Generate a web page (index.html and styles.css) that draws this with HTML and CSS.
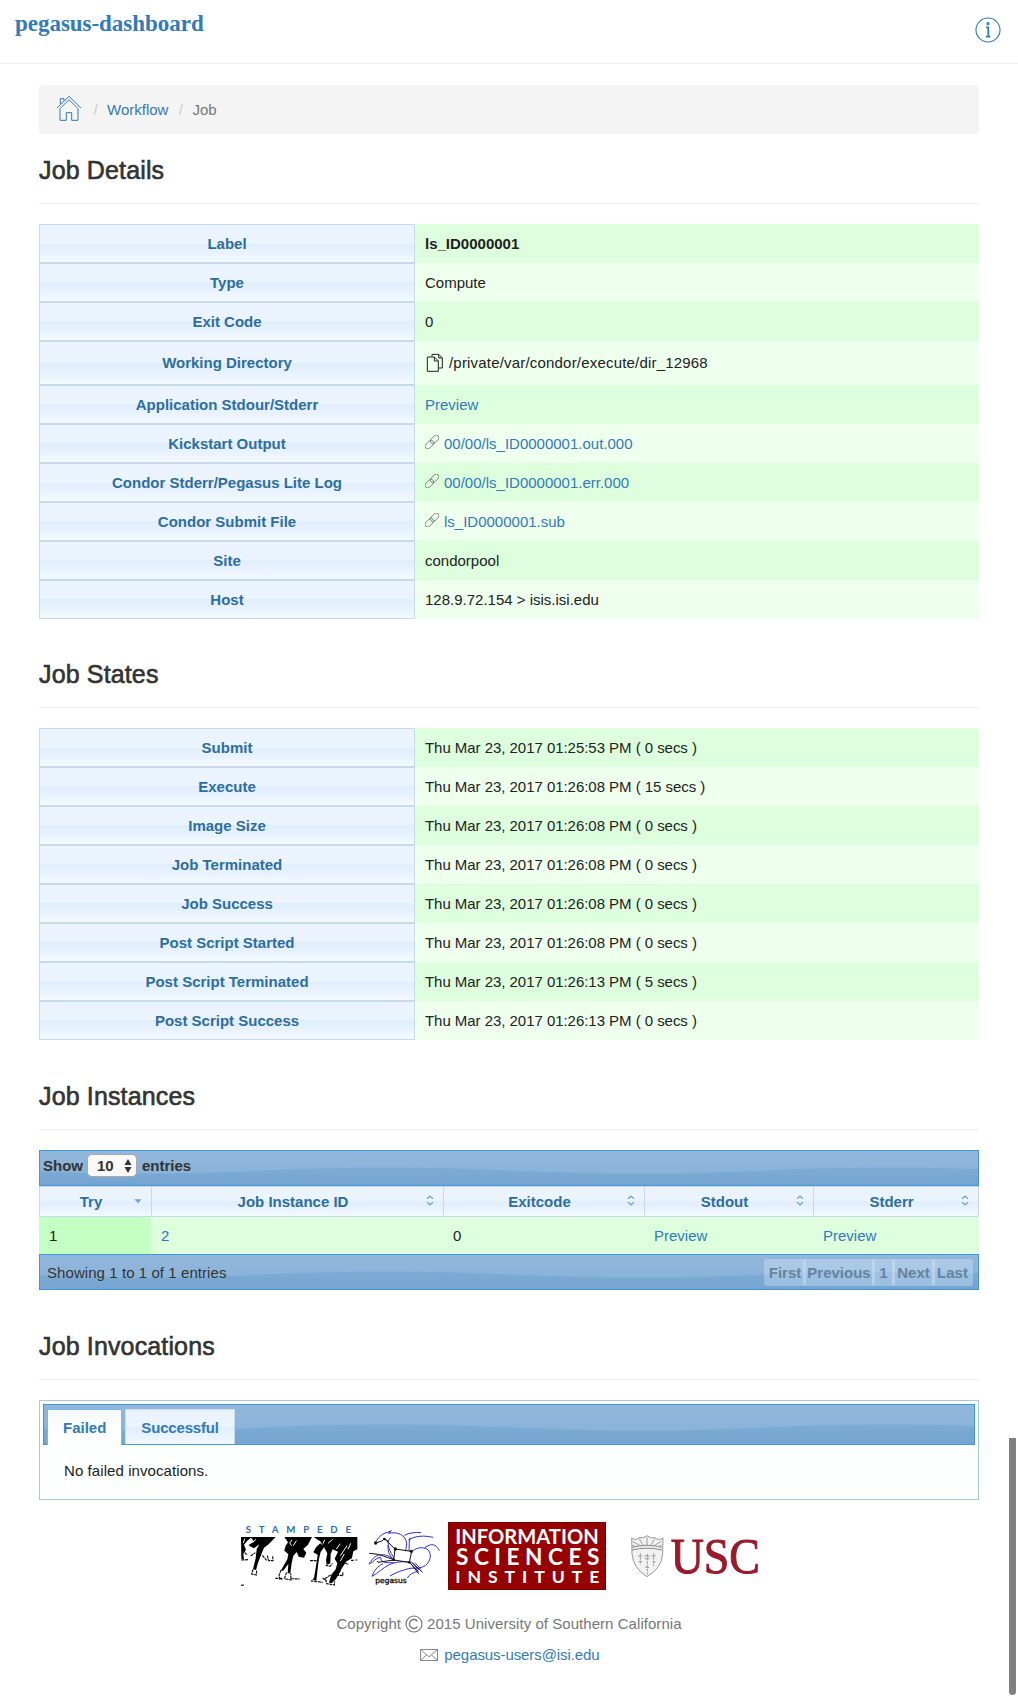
FILE: index.html
```html
<!DOCTYPE html>
<html lang="en">
<head>
<meta charset="utf-8">
<title>pegasus-dashboard</title>
<link rel="stylesheet" href="styles.css">
</head>
<body>
<svg class="defs" width="0" height="0" aria-hidden="true">
  <symbol id="link" viewBox="0 0 40 42"><g fill="none" stroke="#777" stroke-width="2.600" transform="rotate(-45 20 21)"><rect x="-6" y="13" width="30" height="16" rx="8"/><rect x="16" y="13" width="30" height="16" rx="8"/></g></symbol>
  <symbol id="sort" viewBox="0 0 24 32"><path d="M3 11 12 3l9 8M3 21l9 8 9-8" fill="none" stroke="#72a7d6" stroke-width="4"/></symbol>
</svg>

<header class="topbar">
  <a class="brand" href="#">pegasus-dashboard</a>
  <a class="info" href="#" aria-label="About"><svg width="26" height="26" viewBox="0 0 26 26"><circle cx="13" cy="13" r="12" fill="none" stroke="#337ab7" stroke-width="1.100"/><circle cx="13" cy="6.700" r="1.600" fill="#337ab7"/><path d="M11 10.400H13.300V19.500M10.900 19.600h4.400" fill="none" stroke="#337ab7" stroke-width="1.800"/></svg></a>
</header>

<main class="container">
  <nav class="breadcrumb">
    <a href="#" aria-label="Home"><svg class="home" width="26" height="27" viewBox="168 285 78 81"><path d="M171 324 207 289l36 35M180 361V326l27-27 27 27v35H215V338H199v23ZM181 312V296h11v7" fill="none" stroke="#337ab7" stroke-width="3"/></svg></a>
    <span class="sep">/</span><a href="#">Workflow</a><span class="sep">/</span><span class="here">Job</span>
  </nav>

  <h2>Job Details</h2>
  <table class="details">
    <tr><th>Label</th><td><b>ls_ID0000001</b></td></tr>
    <tr><th>Type</th><td>Compute</td></tr>
    <tr><th>Exit Code</th><td>0</td></tr>
    <tr class="tall"><th>Working Directory</th><td><span class="item path"><svg class="copy" width="18" height="19" viewBox="1188 415 54 57"><path d="M1192 427h21l12 12v31h-33ZM1213 427v12h12M1206 426v-7h20l11 11v30h-10M1226 419v11h11" fill="none" stroke="#222" stroke-width="3"/></svg>/private/var/condor/execute/dir_12968</span></td></tr>
    <tr><th>Application Stdour/Stderr</th><td><a href="#">Preview</a></td></tr>
    <tr><th>Kickstart Output</th><td><span class="item"><svg class="chain"><use href="#link"/></svg><a href="#">00/00/ls_ID0000001.out.000</a></span></td></tr>
    <tr><th>Condor Stderr/Pegasus Lite Log</th><td><span class="item"><svg class="chain"><use href="#link"/></svg><a href="#">00/00/ls_ID0000001.err.000</a></span></td></tr>
    <tr><th>Condor Submit File</th><td><span class="item"><svg class="chain"><use href="#link"/></svg><a href="#">ls_ID0000001.sub</a></span></td></tr>
    <tr><th>Site</th><td>condorpool</td></tr>
    <tr><th>Host</th><td>128.9.72.154 &gt; isis.isi.edu</td></tr>
  </table>

  <h2>Job States</h2>
  <table class="details states">
    <tr><th>Submit</th><td>Thu Mar 23, 2017 01:25:53 PM ( 0 secs )</td></tr>
    <tr><th>Execute</th><td>Thu Mar 23, 2017 01:26:08 PM ( 15 secs )</td></tr>
    <tr><th>Image Size</th><td>Thu Mar 23, 2017 01:26:08 PM ( 0 secs )</td></tr>
    <tr><th>Job Terminated</th><td>Thu Mar 23, 2017 01:26:08 PM ( 0 secs )</td></tr>
    <tr><th>Job Success</th><td>Thu Mar 23, 2017 01:26:08 PM ( 0 secs )</td></tr>
    <tr><th>Post Script Started</th><td>Thu Mar 23, 2017 01:26:08 PM ( 0 secs )</td></tr>
    <tr><th>Post Script Terminated</th><td>Thu Mar 23, 2017 01:26:13 PM ( 5 secs )</td></tr>
    <tr><th>Post Script Success</th><td>Thu Mar 23, 2017 01:26:13 PM ( 0 secs )</td></tr>
  </table>

  <h2 class="wide-gap">Job Instances</h2>
  <section>
    <div class="bar length-bar">Show <span class="select">10<svg width="8" height="14" viewBox="0 0 8 14"><path d="M4 0 7.500 6H.5ZM4 14 .5 8h7Z" fill="#333"/></svg></span> entries</div>
    <div class="grid head">
      <div>Try<svg class="sort" viewBox="0 0 24 32"><path d="M1 12h22L12 24Z" fill="#6ea5d4"/></svg></div>
      <div>Job Instance ID<svg class="sort"><use href="#sort"/></svg></div>
      <div>Exitcode<svg class="sort"><use href="#sort"/></svg></div>
      <div>Stdout<svg class="sort"><use href="#sort"/></svg></div>
      <div>Stderr<svg class="sort"><use href="#sort"/></svg></div>
    </div>
    <div class="grid row">
      <div class="sorted">1</div><div><a href="#">2</a></div><div>0</div><div><a href="#">Preview</a></div><div><a href="#">Preview</a></div>
    </div>
    <div class="bar page-bar">
      <span>Showing 1 to 1 of 1 entries</span>
      <div class="pager"><span class="p-first">First</span><span class="p-prev">Previous</span><span class="p-one">1</span><span class="p-next">Next</span><span class="p-last">Last</span></div>
    </div>
  </section>

  <h2 class="wide-gap">Job Invocations</h2>
  <section class="tabs">
    <div class="bar tab-bar"><a class="tab active" href="#">Failed</a><a class="tab" href="#">Successful</a></div>
    <p>No failed invocations.</p>
  </section>
</main>

<footer>
  <div class="logos">
    <svg class="stampede" width="118" height="68" viewBox="30 36 354 204">
      <text x="47" y="70" font-family="Lato, sans-serif" font-weight="bold" font-size="29" fill="#2a6fad" textLength="316">STAMPEDE</text>
      <path d="M33 81H66L52 92 42 104 48 119 40 131 42 151 34 146ZM62 81H137L116 103 102 113 94 133 84 158 78 180 69 178 77 145 80 118 88 103 72 115 54 106 72 95ZM163 81H246L234 104 220 117 229 128 222 143 206 140 200 126 190 137 185 160 181 190 173 190 175 162 159 183 153 181 172 148 175 133 163 122 167 107 174 97ZM251 81H382V118L370 124 366 144 348 155 334 178 318 207 306 219 297 218 304 194 317 178 322 160 314 146 324 125 308 118 302 132 301 160 290 165 288 150 292 130 282 112 272 126 266 150 262 185 259 212 251 210 256 180 261 150 263 134 250 127 258 112 274 97Z" fill="#000"/>
      <path d="M69 178 65 192 79 195 80 181M153 180 147 197 150 208 158 207M170 187 163 206 183 210 182 190M255 203 245 213 278 217M302 195 286 205 290 221 313 225 314 214M331 181 324 196 339 197 338 187M34 150 55 149M62 138l14-10M97 136 110 151M112 137l4 15h13l-1-14M36 121l15 13M240 152h26M287 166l13 3 8-9M136 205h22M183 206l26 1M363 151h8M376 150h6M33 226l9-1M278 204l12 9M345 158l10 6M353 124l-22 10" fill="none" stroke="#111" stroke-width="3.500" stroke-dasharray="9 2"/>
      <path d="M44 86 40 99M52 100l6 8M78 88l-10 9M186 90l-7 9 6 8M267 92l9 12M284 89l-5 12M308 88l-14 12M331 101l-12 16M351 107l-20 30M362 100l-8 18M199 92l-9 15M343 132l-12 21" fill="none" stroke="#fff" stroke-width="3"/>
    </svg>
    <svg class="pegasus" width="74" height="68" viewBox="414 36 222 204">
      <g fill="none" stroke="#2020d0" stroke-width="2.800"><path d="M436 98C445 81 456 70 474 67l10-5-8 8c27-6 51 5 54 30l-3 24M523 76c14-7 31-10 50-8M535 90c21-13 48-14 74-8M537 122c2-16-2-25 4-39M548 123c17-13 29-11 43-6 19 14 9 46-13 54-18 7-32 1-43 5-16 5-34 9-55 22M584 113c20-14 34-12 44 9M482 82c-18 18 0 45 11 65M475 105c-5 21 9 39 17 45-22-22-54-22-69 4-5 5-6 6-5 8 12-5 18-18 33-20 6 24 28 13 40 17M538 157c-18-4-45-1-62 8-18 9-31 24-50 34 6-16 15-30 33-38M541 160l24 24c-16 3-27 9-33 20M547 158l19 22M555 158l18 20"/></g>
      <path d="M436 99l20-6 7-7 12 8M463 86l32 31 50 7-7 33-47-7 4-33M491 150l-47 7-3-4M492 149l-47-16-27-3M539 157l28 35M544 156l34 31" fill="none" stroke="#111" stroke-width="3"/>
      <g fill="#111"><circle cx="437" cy="99" r="5"/><circle cx="463" cy="87" r="4"/><circle cx="496" cy="117" r="5"/><circle cx="544" cy="124" r="5"/><circle cx="491" cy="150" r="4"/><circle cx="538" cy="157" r="4"/></g>
      <text x="436" y="218" font-family="DejaVu Sans, sans-serif" font-size="22" fill="#111" stroke="#111" stroke-width="1" textLength="94" lengthAdjust="spacingAndGlyphs">pegasus</text>
    </svg>
    <svg class="isi" width="158" height="68" viewBox="54 36 474 204">
      <rect x="55.500" y="37.500" width="471" height="201" fill="#970000" stroke="#740000" stroke-width="3"/>
      <g font-family="Lato, sans-serif" font-weight="bold" fill="#fff">
        <text x="76" y="101" font-size="65" textLength="430" lengthAdjust="spacingAndGlyphs">INFORMATION</text>
        <text x="78" y="166" font-size="68" textLength="430">SCIENCES</text>
        <text x="76" y="218" font-size="53" textLength="432">INSTITUTE</text>
      </g>
    </svg>
    <svg class="usc" width="130" height="68" viewBox="600 36 390 204">
      <g fill="none" stroke="#999" stroke-width="3"><path d="M605 84q13 9 22-1 12 4 24-6 12 10 24 6 10 10 24 1l-1 47q-2 43-47 69-41-24-45-69Z" fill="#f2f2f2"/><path d="M606 112q45-12 90 0M606 120q45-11 90 0" stroke="#888"/><path d="M651 108V82M641 108l-13-21M661 108l13-21M633 109l-25-15M669 109l25-15M617 110l-10-4M686 110l8-5"/><path d="M631 130v34M652 132v61M671 130v38" stroke-dasharray="8 3"/><path d="M624 138h13M643 138h16M664 138h13M626 155h10M646 172h11M668 156h8M645 146h13"/></g>
      <text x="722" y="190" font-family="Liberation Serif, serif" font-size="153" fill="#991b2b" stroke="#991b2b" stroke-width="3" textLength="268" lengthAdjust="spacingAndGlyphs">USC</text>
    </svg>
  </div>
  <p class="copyright">Copyright <svg width="18" height="18" viewBox="0 0 18 18"><circle cx="9" cy="9" r="8" fill="none" stroke="#777" stroke-width="1.200"/><path d="M12.500 6.300a4.500 4.500 0 1 0 0 5.400" fill="none" stroke="#777" stroke-width="1.300"/></svg> 2015 University of Southern California</p>
  <p class="mail"><svg width="18" height="12" viewBox="0 0 18 12"><path d="M.5.5h17v11H.5ZM.5.5 9 7.800 17.500.5M.5 11.500 6.500 6M17.500 11.500l-6-5.500" fill="none" stroke="#888"/></svg><a href="#">pegasus-users@isi.edu</a></p>
</footer>
<div class="scroll-thumb"></div>
</body>
</html>
```
FILE: styles.css
```css
* { box-sizing: border-box; }
body {
  margin: 0;
  height: 1697px;
  overflow: hidden;
  position: relative;
  background: #fff;
  color: #222;
  font: 15px/21px "Liberation Sans", Arial, sans-serif;
}
a { color: #337ab7; text-decoration: none; }
svg { flex: none; }
.defs { position: absolute; }

.topbar {
  height: 64px;
  padding: 10px 17px 0 15px;
  display: flex;
  justify-content: space-between;
  align-items: flex-start;
  border-bottom: 1px solid #eee;
}
.brand { font: bold 23px/28px "Liberation Serif", serif; letter-spacing: -.03px; }
.info { height: 26px; margin-top: 7px; }
.info svg { display: block; }

.container { width: 940px; margin: 21px auto 0 39px; }
.breadcrumb {
  height: 49px;
  padding: 0 17px;
  display: flex;
  align-items: center;
  background: #f4f4f4;
  border-radius: 4px;
}
.home { display: block; margin-top: -3px; }
.sep { width: 24px; padding-left: 1px; text-align: center; color: #ccc; }
.breadcrumb a:first-child { margin-right: 1px; }
.here { color: #777; }

h2 {
  height: 48px;
  margin: 41px 0 20px;
  border-bottom: 1px solid #eee;
  font-size: 25px;
  font-weight: normal;
  line-height: 28px;
  letter-spacing: .14px;
  color: #333;
  -webkit-text-stroke: .6px #333;
}
.breadcrumb + h2 { margin-top: 22px; }
h2.wide-gap { margin-top: 42px; }

.details { width: 100%; border-spacing: 0; table-layout: fixed; }
.details tr { height: 39px; }
.details th {
  width: 376px;
  padding: 0;
  border: 1px solid #c5dbec;
  color: #2e6e9e;
}
.details th, .head > div {
  background: linear-gradient(#ebf4fe, #ebf3fd 50%, #e0eefc 50%, #e4f0fd 65%, #f3f9ff);
}
.details td { padding: 0 10px; background: #efe; }
.details tr:nth-child(odd) td { background: #dfd; }
.details .tall { height: 44px; }
.details .tall th, .details .tall td { padding-bottom: 2px; }
.states td { letter-spacing: -.04px; }
.item { display: flex; align-items: center; }
.path { letter-spacing: .19px; }
.copy { margin: 0 5px 0 1px; }
.chain { width: 14px; height: 14px; margin: -3px 5px 0 0; overflow: visible; }

.bar {
  display: flex;
  align-items: center;
  border: 1px solid #4297d7;
  background: #7aa9d4 url("data:image/svg+xml,%3Csvg xmlns='http://www.w3.org/2000/svg' width='500' height='100'%3E%3Cdefs%3E%3ClinearGradient id='a' x2='0' y2='1'%3E%3Cstop offset='.5' stop-color='%237cabd6'/%3E%3Cstop offset='.7' stop-color='%2374a3cf'/%3E%3C/linearGradient%3E%3ClinearGradient id='b' gradientUnits='userSpaceOnUse' x1='0' y1='30' x2='0' y2='56'%3E%3Cstop stop-color='%2393b7db'/%3E%3Cstop offset='1' stop-color='%238ab3da'/%3E%3C/linearGradient%3E%3C/defs%3E%3Cpath fill='url(%23a)' d='M0 0h500v100H0z'/%3E%3Cpath fill='url(%23b)' d='M0 0H500V52.700C455 54.800 420 55.500 380 55.500 280 55.500 230 49.500 130 49.500 85 49.500 45 50.600 0 52.700Z'/%3E%3C/svg%3E") 50% 50% repeat-x;
}
.length-bar { height: 36px; padding: 0 3px 6px; font-weight: bold; color: #333; }
.select {
  width: 50px;
  height: 23px;
  margin: 1px 5px 0 4px;
  padding: 0 4px 0 9px;
  display: flex;
  align-items: center;
  justify-content: space-between;
  border: 1px solid #a9a9a9;
  border-radius: 5px;
  background: #f8f8f8;
}
.grid { display: grid; grid-template-columns: 112px 292px 201px 169px 166px; }
.head > div {
  height: 31px;
  padding: 0 9px 0 8px;
  display: flex;
  align-items: center;
  border: solid #c5dbec;
  border-width: 1px 0 1px 1px;
  font-weight: bold;
  color: #2e6e9e;
}
.head > div::before { content: ""; margin-right: auto; }
.head > div:last-child { border-right-width: 1px; }
.sort { width: 8px; height: 11px; margin: -2px 0 0 auto; }
.row > div { height: 37px; padding: 1px 10px 0; line-height: 36px; background: #dfd; }
.row .sorted { background: #c4ffc4; }
.page-bar { height: 36px; justify-content: space-between; padding: 0 5px 0 7px; }
.page-bar > span { color: #333; letter-spacing: .07px; }
.pager { display: flex; font-weight: bold; color: #66839f; }
.pager span {
  height: 27px;
  line-height: 27px;
  text-align: center;
  border-radius: 3px;
  background: rgba(223, 239, 252, .35);
}
.pager span + span { margin-left: -3px; }
.pager .p-first { width: 42px; }
.pager .p-prev { width: 72px; }
.pager .p-one { width: 23px; }
.pager .p-next { width: 43px; }
.pager .p-last { width: 41px; }

.tabs { height: 100px; padding: 3px; border: 1px solid #a6c9e2; background: #fdfefe; }
.tab-bar { height: 41px; align-items: flex-start; padding: 4px 3px 0; gap: 3px; }
.tab {
  height: 35px;
  padding: 0 15px;
  border: 1px solid #c5dbec;
  border-bottom: 0;
  line-height: 36px;
  font-weight: bold;
  letter-spacing: -.18px;
  background: linear-gradient(#ebf4fe, #ebf3fd 50%, #e0eefc 50%, #f0f7ff);
}
.tab.active { height: 36px; letter-spacing: 0; border-color: #79b7e7; background: linear-gradient(#f5f8f9, #fdfefe 60%); }
.tabs p { margin: 15px 21px; letter-spacing: .08px; }

.logos { display: flex; justify-content: center; padding-right: 18px; margin-top: 22px; }
.logos svg { overflow: visible; }
.pegasus { margin: 0 6px 0 10px; }
.usc { margin-left: 24px; }
footer p { display: flex; justify-content: center; align-items: center; margin: 0; color: #777; }
footer .copyright { margin-top: 23px; gap: 4px; letter-spacing: .05px; }
footer .mail { margin-top: 10px; padding-left: 2px; gap: 6px; letter-spacing: -.08px; }
.scroll-thumb {
  position: absolute;
  left: 1009px;
  top: 1438px;
  width: 7px;
  height: 257px;
  border-radius: 0 0 4px 4px;
  background: #808080;
}
```
